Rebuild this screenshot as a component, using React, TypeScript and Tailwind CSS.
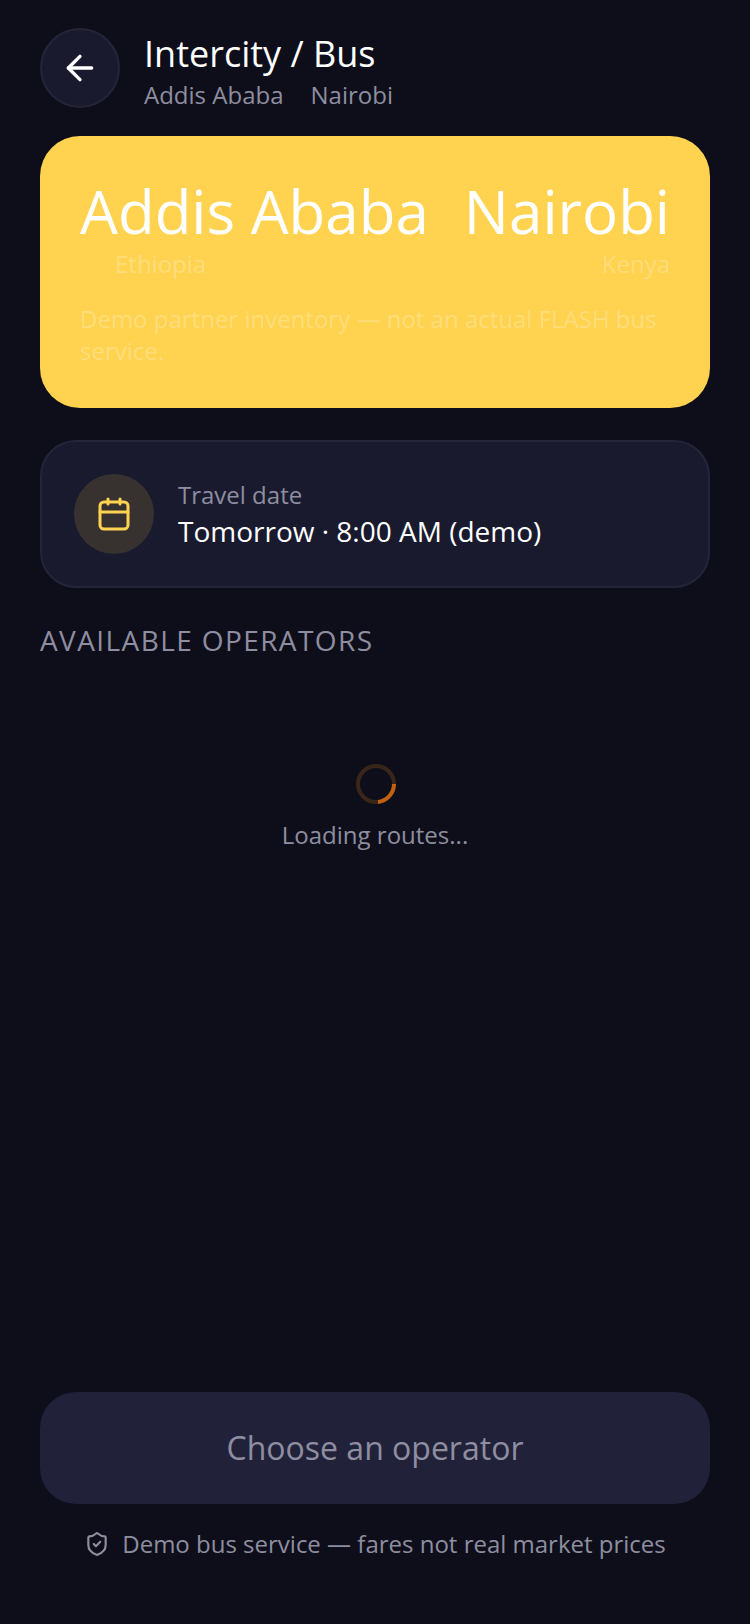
import { ArrowLeft, ShieldCheck } from "lucide-react";

const App = () => {
  return (
    <div className="w-[750px] h-[1624px] flex flex-col bg-[#0d0e1a] px-10 font-['Open_Sans',sans-serif] overflow-hidden">
      {/* Header */}
      <div className="flex items-center gap-6 pt-7 h-[108px]">
        <div className="w-20 h-20 rounded-full flex items-center justify-center bg-[#1a1a2e] border-2 border-[#25253a]">
          <ArrowLeft className="w-10 h-10 text-white" strokeWidth={2} />
        </div>
        <div className="pt-[7px]">
          <div className="text-[36px] leading-[46px] text-white">Intercity / Bus</div>
          <div className="flex gap-[27px] text-[24px] leading-[36px] text-[#8e8ea0]">
            <span>Addis Ababa</span>
            <span>Nairobi</span>
          </div>
        </div>
      </div>

      {/* Route card */}
      <div className="mt-7 h-[272px] rounded-[40px] bg-[#ffd24f] px-10 pt-[36px]">
        <div className="flex justify-between text-[60px] leading-[78px] text-white">
          <span>Addis Ababa</span>
          <span>Nairobi</span>
        </div>
        <div className="flex justify-between pl-[35px] text-[24px] leading-[28px] text-[#ffffff40]">
          <span>Ethiopia</span>
          <span>Kenya</span>
        </div>
        <div className="mt-[25px] text-[24px] leading-[32px] text-[#ffffff40]">
          Demo partner inventory — not an actual FLASH bus service.
        </div>
      </div>

      {/* Travel date */}
      <div className="mt-8 h-[148px] flex items-center gap-6 rounded-[36px] bg-[#1a1a2e] border-2 border-[#25253a] px-8">
        <div className="w-20 h-20 rounded-full flex items-center justify-center bg-[#37322f]">
          <svg width="36" height="36" viewBox="0 0 36 36" fill="none" stroke="#ffd24f" strokeWidth="3" strokeLinecap="round" strokeLinejoin="round">
            <rect x="4" y="6" width="28" height="27" rx="4" />
            <path d="M4 16h28M12 3v5M24 3v5" />
          </svg>
        </div>
        <div>
          <div className="text-[24px] leading-[34px] text-[#8e8ea0]">Travel date</div>
          <div className="text-[28px] leading-[38px] text-white">Tomorrow · 8:00 AM (demo)</div>
        </div>
      </div>

      <div className="mt-[34px] text-[28px] leading-[36px] tracking-[1.4px] text-[#8e8ea0]">AVAILABLE OPERATORS</div>

      {/* Loading */}
      <div className="mt-[106px] flex flex-col items-center">
        <svg width="40" height="40" viewBox="0 0 40 40" fill="none" className="ml-[1px]">
          <circle cx="20" cy="20" r="18" stroke="#3a2519" strokeWidth="4" />
          <path d="M38 20 A18 18 0 0 1 22 37.9" stroke="#c2610f" strokeWidth="4" />
        </svg>
        <div className="mt-[14px] text-[24px] leading-[34px] text-[#8e8ea0]">Loading routes...</div>
      </div>

      {/* Footer */}
      <div className="mt-auto pb-[64px]">
        <div className="h-28 rounded-[36px] bg-[#21213a] flex items-center justify-center text-[32px] text-[#8e8ea0]">
          Choose an operator
        </div>
        <div className="mt-6 flex items-center justify-center gap-3 text-[24px] leading-[32px] text-[#8e8ea0]">
          <ShieldCheck className="w-[26px] h-[26px]" strokeWidth={2} />
          <span>Demo bus service — fares not real market prices</span>
        </div>
      </div>
    </div>
  );
};

export default App;
